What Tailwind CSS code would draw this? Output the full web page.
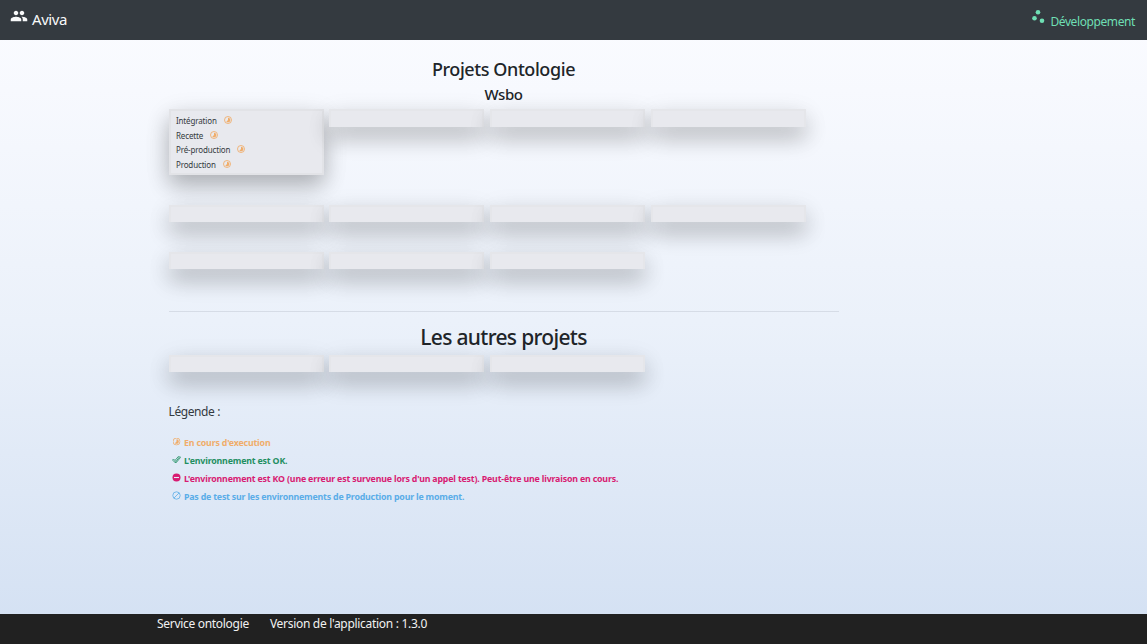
<!DOCTYPE html>
<html lang="fr">
<head>
<meta charset="utf-8">
<title>Aviva</title>
<script src="https://cdn.jsdelivr.net/npm/@tailwindcss/browser@4"></script>
</head>
<body class="h-[644px] overflow-hidden flex flex-col font-['Noto_Sans',sans-serif] text-[#212529] bg-linear-to-b from-[#fafbff] from-5% via-[#ebf1fa] via-50% to-[#d4e1f3] to-97%">
<svg class="hidden">
  <symbol id="run" viewBox="0 0 24 24"><circle cx="12" cy="12" r="10.500" fill="none" stroke="currentColor" stroke-width="2.600"/><path fill="currentColor" d="M12 5v7l-5 5A7 7 0 1 0 12 5Z"/></symbol>
</svg>
<header class="h-10 shrink-0 bg-[#343a40] flex justify-between px-[10px]">
  <div class="flex text-[#f8f9fa]">
    <svg class="w-[18px] h-[18px] mt-[7px]" viewBox="0 0 24 24" fill="currentColor"><path d="M16 11c1.660 0 2.990-1.340 2.990-3S17.660 5 16 5s-3 1.340-3 3 1.340 3 3 3Zm-8 0c1.660 0 2.990-1.340 2.990-3S9.660 5 8 5 5 6.340 5 8s1.340 3 3 3Zm0 2c-2.330 0-7 1.170-7 3.500V19h14v-2.500c0-2.330-4.670-3.500-7-3.500Zm8 0c-.29 0-.62.020-.97.050 1.160.84 1.970 1.970 1.970 3.450V19h6v-2.500c0-2.330-4.670-3.500-7-3.500Z"/></svg>
    <span class="ml-1 mt-[7px] text-[15px] tracking-[-0.450px] leading-6 h-6">Aviva</span>
  </div>
  <div class="flex text-[#6fdfb4]">
    <svg class="w-[14px] h-[14px] mt-[10px] mr-[5px]" viewBox="0 0 14 14" fill="currentColor"><circle cx="7" cy="2.300" r="2.300"/><circle cx="3.500" cy="8.200" r="2.300"/><circle cx="11" cy="10.800" r="2.300"/></svg>
    <span class="mt-[14px] mr-[2px] text-[12px] tracking-[-0.400px] leading-4 h-4">Développement</span>
  </div>
</header>
<main class="flex-1 w-[670px] ml-[168.500px] flex flex-col">
  <h2 class="mt-[17px] h-6 leading-6 text-center text-[18px] tracking-[-0.420px] font-medium">Projets Ontologie</h2>
  <h3 class="mt-[3px] h-5 leading-5 text-center text-[15px] tracking-[-0.400px] font-medium">Wsbo</h3>
  <section class="mt-[5px] h-24 grid grid-cols-[repeat(4,155px)] gap-x-[5.850px] items-start">
    <div class="h-[66px] bg-[#e8e9ee] border-2 border-[#e2e3e7] shadow-[0_12px_22px_rgba(0,0,0,.2),0_6px_26px_rgba(0,0,0,.12)] pl-[5.500px] pt-[3px] text-[8px] tracking-[-0.150px] leading-[14.700px] text-[#343a40]">
      <div class="flex gap-[7px] h-[14.700px]"><span>Intégration</span><svg class="size-[8px] mt-[2px] text-[#f0ad6a]"><use href="#run"/></svg></div>
      <div class="flex gap-[7px] h-[14.700px]"><span>Recette</span><svg class="size-[8px] mt-[2px] text-[#f0ad6a]"><use href="#run"/></svg></div>
      <div class="flex gap-[7px] h-[14.700px]"><span>Pré-production</span><svg class="size-[8px] mt-[2px] text-[#f0ad6a]"><use href="#run"/></svg></div>
      <div class="flex gap-[7px] h-[14.700px]"><span>Production</span><svg class="size-[8px] mt-[2px] text-[#f0ad6a]"><use href="#run"/></svg></div>
    </div>
    <div class="h-[18px] bg-[#e8e9ee] border-2 border-b-0 border-[#e5e6ea] shadow-[0_12px_22px_rgba(0,0,0,.2),0_6px_26px_rgba(0,0,0,.1)]"></div>
    <div class="h-[18px] bg-[#e8e9ee] border-2 border-b-0 border-[#e5e6ea] shadow-[0_12px_22px_rgba(0,0,0,.2),0_6px_26px_rgba(0,0,0,.1)]"></div>
    <div class="h-[18px] bg-[#e8e9ee] border-2 border-b-0 border-[#e5e6ea] shadow-[0_12px_22px_rgba(0,0,0,.2),0_6px_26px_rgba(0,0,0,.1)]"></div>
  </section>
  <section class="h-[106px] grid grid-cols-[repeat(4,155px)] grid-rows-[17px_17px] gap-x-[5.850px] gap-y-[30px]">
    <div class="bg-[#e8e9ee] border-2 border-b-0 border-[#e5e6ea] shadow-[0_12px_22px_rgba(0,0,0,.2),0_6px_26px_rgba(0,0,0,.1)]"></div>
    <div class="bg-[#e8e9ee] border-2 border-b-0 border-[#e5e6ea] shadow-[0_12px_22px_rgba(0,0,0,.2),0_6px_26px_rgba(0,0,0,.1)]"></div>
    <div class="bg-[#e8e9ee] border-2 border-b-0 border-[#e5e6ea] shadow-[0_12px_22px_rgba(0,0,0,.2),0_6px_26px_rgba(0,0,0,.1)]"></div>
    <div class="bg-[#e8e9ee] border-2 border-b-0 border-[#e5e6ea] shadow-[0_12px_22px_rgba(0,0,0,.2),0_6px_26px_rgba(0,0,0,.1)]"></div>
    <div class="bg-[#e8e9ee] border-2 border-b-0 border-[#e5e6ea] shadow-[0_12px_22px_rgba(0,0,0,.2),0_6px_26px_rgba(0,0,0,.1)]"></div>
    <div class="bg-[#e8e9ee] border-2 border-b-0 border-[#e5e6ea] shadow-[0_12px_22px_rgba(0,0,0,.2),0_6px_26px_rgba(0,0,0,.1)]"></div>
    <div class="bg-[#e8e9ee] border-2 border-b-0 border-[#e5e6ea] shadow-[0_12px_22px_rgba(0,0,0,.2),0_6px_26px_rgba(0,0,0,.1)]"></div>
  </section>
  <hr class="border-t border-[#d6dce6]">
  <h2 class="mt-[11px] h-7 leading-7 text-center text-[21px] tracking-[-0.680px] font-medium">Les autres projets</h2>
  <section class="mt-1 h-[17px] grid grid-cols-[repeat(4,155px)] gap-x-[5.850px]">
    <div class="bg-[#e8e9ee] border-2 border-b-0 border-[#e5e6ea] shadow-[0_12px_22px_rgba(0,0,0,.2),0_6px_26px_rgba(0,0,0,.1)]"></div>
    <div class="bg-[#e8e9ee] border-2 border-b-0 border-[#e5e6ea] shadow-[0_12px_22px_rgba(0,0,0,.2),0_6px_26px_rgba(0,0,0,.1)]"></div>
    <div class="bg-[#e8e9ee] border-2 border-b-0 border-[#e5e6ea] shadow-[0_12px_22px_rgba(0,0,0,.2),0_6px_26px_rgba(0,0,0,.1)]"></div>
  </section>
  <p class="mt-8 h-4 leading-4 text-[12px] tracking-[-0.400px] text-[#343a40]">Légende :</p>
  <ul class="mt-[14px] pl-[3.500px] text-[8.800px] tracking-[-0.170px] leading-[18px] font-bold">
    <li class="flex h-[18px] gap-[3px] text-[#f0ad6a]"><svg class="size-[9px] mt-[3px] p-[.5px]"><use href="#run"/></svg><span>En cours d'execution</span></li>
    <li class="flex h-[18px] gap-[3px] text-[#1f8f62]"><svg class="size-[9px] mt-[3px]" viewBox="0 0 9 9" fill="none" stroke="currentColor" stroke-width=".8"><path d="m.5 5 1-1 1.500 1.500L6.300 1.500l.9.800M3 5.500l1 1 3.800-5 .8.800L4 7.900 2.700 6.600M.5 5 3 7.500l.8-.9"/></svg><span>L'environnement est OK.</span></li>
    <li class="flex h-[18px] gap-[3px] text-[#d81b72]"><svg class="size-[9px] mt-[3px]" viewBox="0 0 9 9"><circle cx="4.500" cy="4.500" r="4" fill="currentColor"/><path d="M2 4.500h5" stroke="#e3ecf8" stroke-width="1.100"/></svg><span>L'environnement est KO (une erreur est survenue lors d'un appel test). Peut-être une livraison en cours.</span></li>
    <li class="flex h-[18px] gap-[3px] text-[#5aade8]"><svg class="size-[9px] mt-[3px]" viewBox="0 0 9 9" fill="none" stroke="currentColor" stroke-width=".8"><circle cx="4.500" cy="4.500" r="3.700"/><path d="m2 7 5-5"/></svg><span class="tracking-[-0.190px]">Pas de test sur les environnements de Production pour le moment.</span></li>
  </ul>
</main>
<footer class="h-[30px] shrink-0 bg-[#212121] text-[#f1f1f1] pl-[157px] pt-[2px] flex gap-[21px] text-[12px] tracking-[-0.300px] leading-4">
  <span>Service ontologie</span><span>Version de l'application : 1.3.0</span>
</footer>
</body>
</html>
